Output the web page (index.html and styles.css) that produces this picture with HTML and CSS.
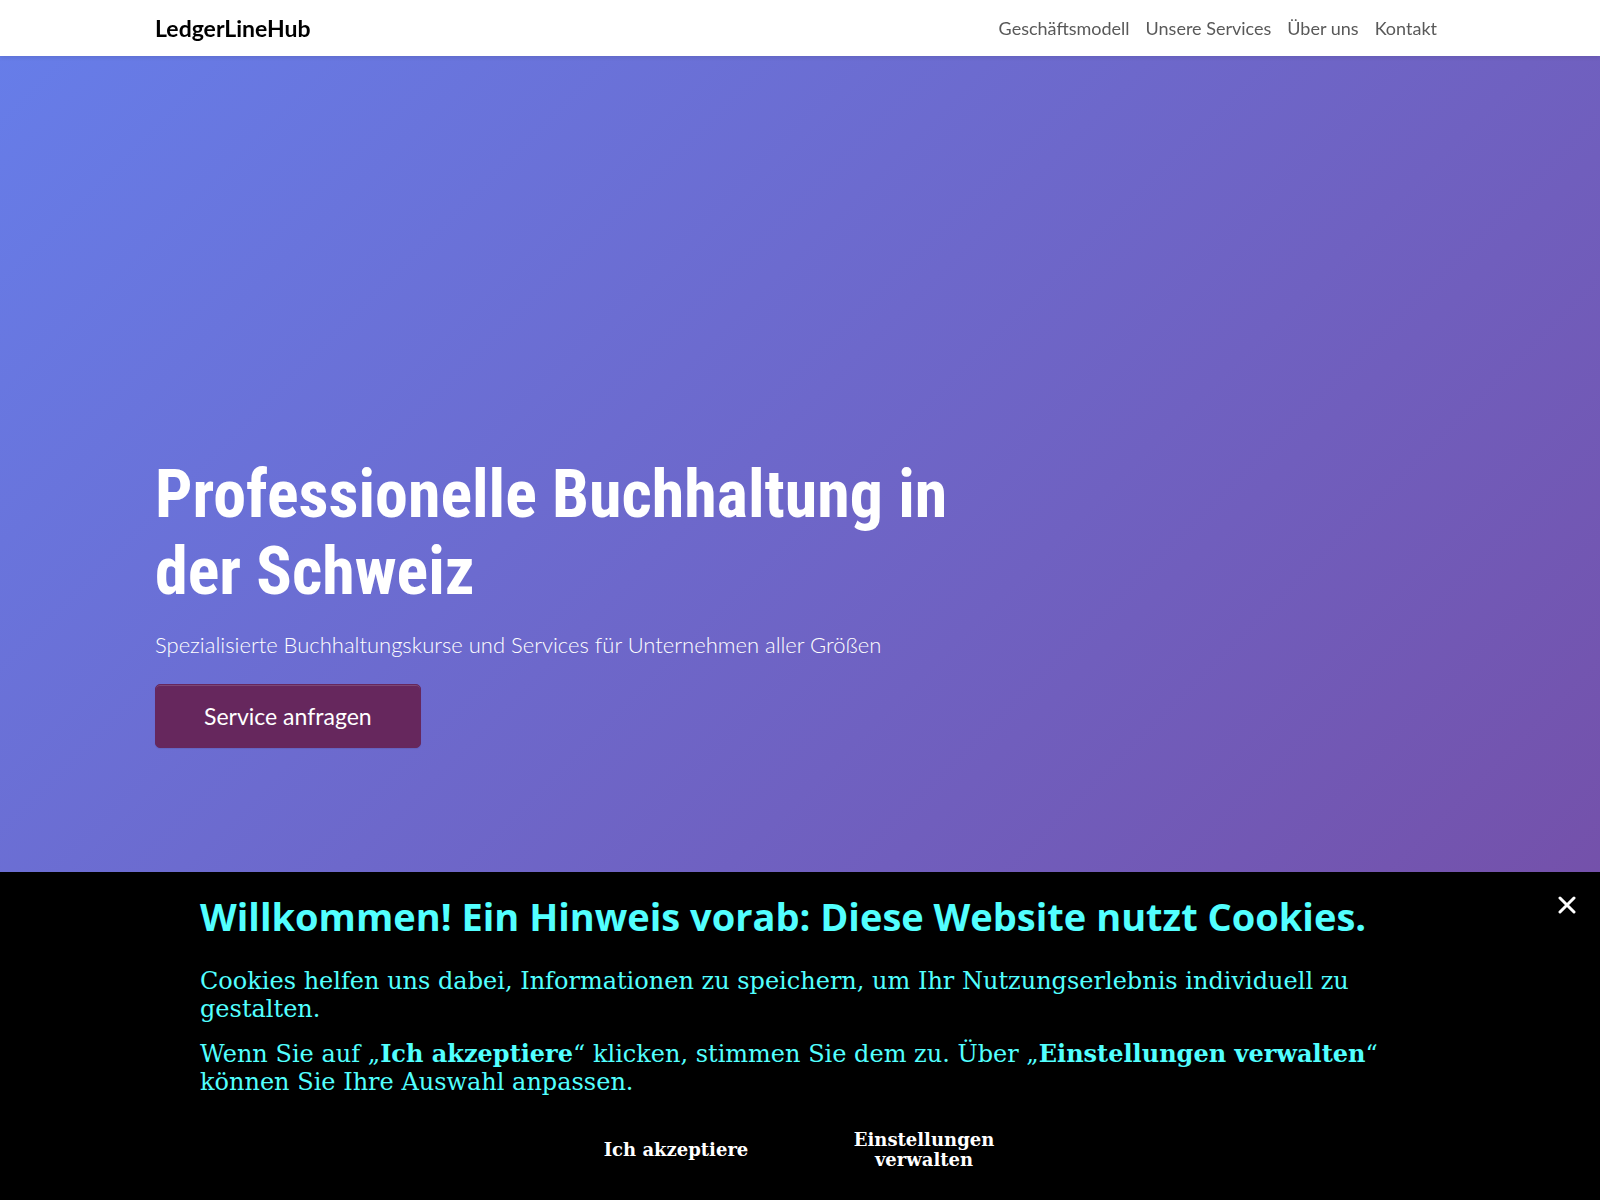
FILE: index.html
```html
<!DOCTYPE html>
<html lang="de">
<head>
    <meta charset="UTF-8">
    <meta name="viewport" content="width=device-width, initial-scale=1">
    <title>LedgerLineHub</title>
    <link rel="stylesheet" href="styles.css">
</head>
<body>
    <header class="navbar">
        <div class="container navbar-inner">
            <a class="brand" href="#">LedgerLineHub</a>
            <nav class="nav">
                <a href="#modell">Geschäftsmodell</a>
                <a href="#services">Unsere Services</a>
                <a href="#about">Über uns</a>
                <a href="#kontakt">Kontakt</a>
            </nav>
        </div>
    </header>

    <main class="hero">
        <div class="container">
            <div class="hero-text">
                <h1>Professionelle Buchhaltung in der Schweiz</h1>
                <p>Spezialisierte Buchhaltungskurse und Services für Unternehmen aller Größen</p>
                <a class="btn" href="#kontakt">Service anfragen</a>
            </div>
        </div>
    </main>

    <section class="cookie" aria-label="Cookies">
        <button class="cookie-close" type="button" aria-label="Schließen">
            <svg width="18" height="18" viewBox="0 0 18 18" fill="none" stroke="#fff" stroke-width="3" stroke-linecap="round"><path d="M2 2l14 14M16 2L2 16"/></svg>
        </button>
        <div class="cookie-inner">
            <h2>Willkommen! Ein Hinweis vorab: Diese Website nutzt Cookies.</h2>
            <p>Cookies helfen uns dabei, Informationen zu speichern, um Ihr Nutzungserlebnis individuell zu gestalten.</p>
            <p>Wenn Sie auf „<strong>Ich akzeptiere</strong>“ klicken, stimmen Sie dem zu. Über „<strong>Einstellungen verwalten</strong>“ können Sie Ihre Auswahl anpassen.</p>
            <div class="cookie-actions">
                <button type="button">Ich akzeptiere</button>
                <button type="button">Einstellungen verwalten</button>
            </div>
        </div>
    </section>
</body>
</html>
```
FILE: styles.css
```css
* { box-sizing: border-box; }
body {
    margin: 0;
    font-family: Lato, sans-serif;
    color: #000;
}
a { color: inherit; text-decoration: none; }
.container { width: 100%; max-width: 1320px; margin: 0 auto; padding: 0 15px; }

.navbar {
    position: fixed;
    top: 0;
    left: 0;
    right: 0;
    z-index: 10;
    background: #fff;
    box-shadow: 0 2px 4px rgba(0,0,0,0.08);
}
.navbar-inner { display: flex; align-items: center; justify-content: space-between; height: 56px; }
.brand { font-size: 23px; font-weight: 700; }
.nav { display: flex; color: #595959; font-size: 18px; }
.nav a { padding: 8px; }

.hero {
    display: flex;
    align-items: center;
    min-height: 100vh;
    background: linear-gradient(135deg, #667eea 0%, #764ba2 100%);
    color: #fff;
}
.hero-text { max-width: 860px; }
.hero h1 {
    margin: 0 0 20px;
    padding-top: 4px;
    font-family: "Roboto Condensed", "Liberation Sans Narrow", "DejaVu Sans Condensed", sans-serif;
    font-size: 66px;
    font-weight: 700;
    line-height: 77px;
}
.hero p { margin: 0 0 24px; font-size: 22px; font-weight: 300; line-height: 30px; }
.btn {
    display: inline-block;
    padding: 16px 48px;
    border: 1px solid #66275d;
    border-radius: 5px;
    background: #66275d;
    box-shadow: inset 0 1px 0 rgba(255,255,255,0.15), 0 1px 1px rgba(0,0,0,0.08);
    font-size: 23px;
    line-height: 30px;
}

.cookie {
    position: fixed;
    left: 0;
    right: 0;
    bottom: 0;
    z-index: 20;
    background: #000;
    color: #52ffff;
}
.cookie-inner { max-width: 1240px; margin: 0 auto; padding: 20px 20px 30px; }
.cookie h2 { margin: 0 0 27px; font-family: "Open Sans", sans-serif; font-size: 38px; font-weight: 700; line-height: 48px; }
.cookie p { margin: 0 0 17px; font-family: "DejaVu Serif", serif; font-size: 24px; line-height: 28px; }
.cookie strong { font-weight: 700; }
.cookie-actions { display: flex; justify-content: center; gap: 48px; padding-top: 17px; }
.cookie button { border: 0; background: none; color: #fff; cursor: pointer; }
.cookie-actions button {
    width: 200px;
    padding: 0 16px;
    font-family: "DejaVu Serif", serif;
    font-size: 18px;
    font-weight: 700;
    line-height: 20px;
}
.cookie-close { position: absolute; top: 24px; right: 24px; display: flex; padding: 0; }
```
